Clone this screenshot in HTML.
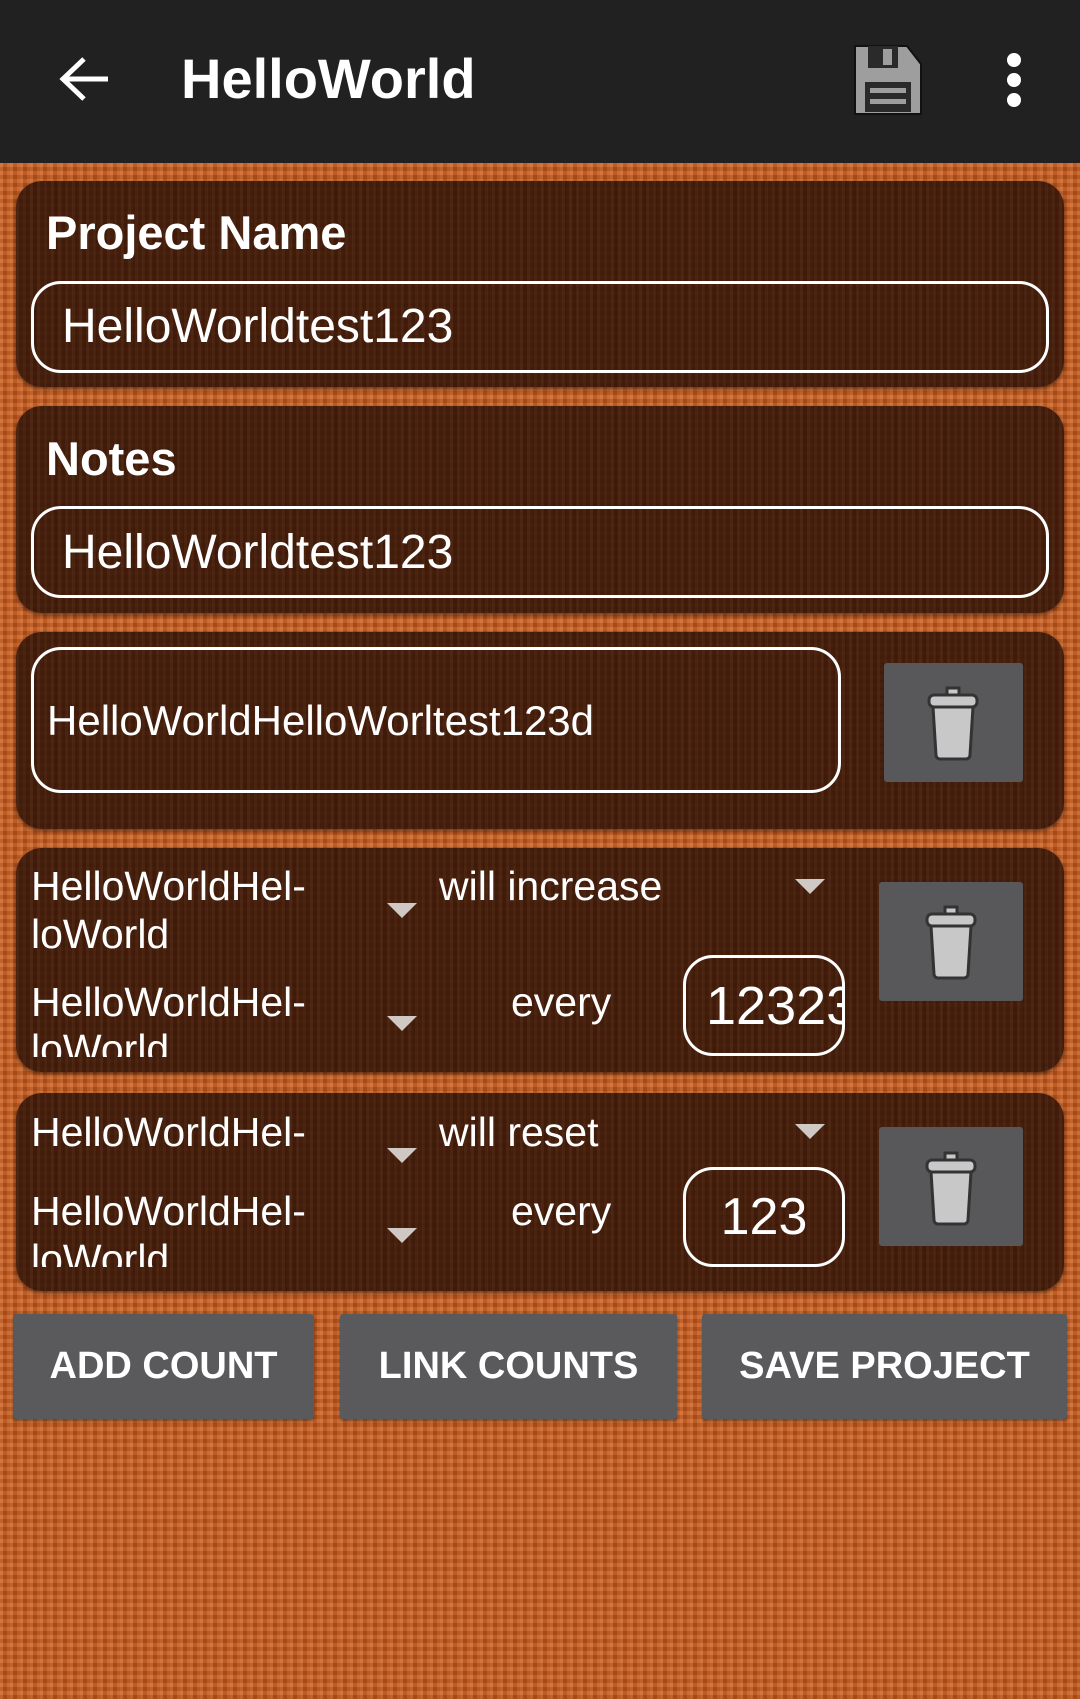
<!DOCTYPE html>
<html><head><meta charset="utf-8"><style>
*{margin:0;padding:0;box-sizing:border-box}
body{width:1080px;height:1699px;position:relative;overflow:hidden;font-family:"Liberation Sans",sans-serif;color:#fff;
background-color:#c0591f;
background-image:repeating-linear-gradient(90deg,rgba(255,190,140,.18) 0 3px,rgba(120,40,5,.15) 3px 7px,rgba(255,170,120,.1) 7px 10px),
repeating-linear-gradient(0deg,rgba(90,30,0,.15) 0 4px,rgba(255,200,150,.12) 4px 8px);}
.bar{position:absolute;left:0;top:0;width:1080px;height:163px;background:#212121}
.abs{position:absolute}
.card{position:absolute;left:16px;width:1048px;border-radius:26px;background:rgba(50,20,6,.86);box-shadow:0 2px 4px rgba(0,0,0,.5);
background-image:repeating-linear-gradient(90deg,rgba(255,255,255,.03) 0 3px,rgba(0,0,0,.05) 3px 7px)}
.inp{position:absolute;border:3px solid #fff;border-radius:30px}
.lbl{position:absolute;font-weight:bold;font-size:47px;left:46px}
.txt{position:absolute;white-space:nowrap;line-height:46px}
.trash{position:absolute;background:#58585a;border-radius:3px}
.btn{position:absolute;top:1314px;height:105px;background:#5a5a5c;border-radius:3px;font-size:38px;font-weight:bold;text-align:center;line-height:105px;box-shadow:0 2px 3px rgba(0,0,0,.4)}
.arr{position:absolute;width:0;height:0;border-left:15px solid transparent;border-right:15px solid transparent;border-top:15px solid #cfc8c4}
.clip{position:absolute;overflow:hidden}
</style></head><body>
<div class="bar"></div>
<svg class="abs" style="left:58px;top:56px" width="52" height="46" viewBox="0 0 52 46"><path d="M50 23H6M26 3L5 23l21 20" stroke="#fff" stroke-width="5" fill="none"/></svg>
<div class="abs" style="left:181px;top:44px;font-size:56px;font-weight:bold;line-height:70px">HelloWorld</div>
<svg class="abs" style="left:852px;top:44px" width="72" height="72" viewBox="0 0 72 72"><path d="M3 2h52l14 18v50H3z" fill="#9e9e9e" stroke="#111" stroke-width="2"/><rect x="16" y="2" width="30" height="22" fill="#2a2a2a"/><rect x="31" y="5" width="9" height="16" fill="#9e9e9e"/><rect x="13" y="38" width="46" height="30" fill="#2a2a2a"/><rect x="18" y="44" width="36" height="5" fill="#9e9e9e"/><rect x="18" y="55" width="36" height="5" fill="#9e9e9e"/></svg>
<div class="abs" style="left:1007px;top:53px;width:14px;height:14px;border-radius:7px;background:#fff"></div>
<div class="abs" style="left:1007px;top:73px;width:14px;height:14px;border-radius:7px;background:#fff"></div>
<div class="abs" style="left:1007px;top:93px;width:14px;height:14px;border-radius:7px;background:#fff"></div>

<div class="card" style="top:181px;height:206px"></div>
<div class="lbl" style="top:205px">Project Name</div>
<div class="inp" style="left:31px;top:281px;width:1018px;height:92px"></div>
<div class="txt" style="left:62px;top:304px;font-size:48px">HelloWorldtest123</div>

<div class="card" style="top:406px;height:207px"></div>
<div class="lbl" style="top:431px">Notes</div>
<div class="inp" style="left:31px;top:506px;width:1018px;height:92px"></div>
<div class="txt" style="left:62px;top:530px;font-size:48px">HelloWorldtest123</div>

<div class="card" style="top:632px;height:197px"></div>
<div class="inp" style="left:31px;top:647px;width:810px;height:146px"></div>
<div class="txt" style="left:47px;top:698px;font-size:42px">HelloWorldHelloWorltest123d</div>
<div class="trash" style="left:884px;top:663px;width:139px;height:119px"></div>

<div class="card" style="top:848px;height:224px"></div>
<div class="txt" style="left:31px;top:863px;font-size:41px">HelloWorldHel-</div>
<div class="txt" style="left:31px;top:911px;font-size:41px">loWorld</div>
<div class="arr" style="left:387px;top:903px"></div>
<div class="txt" style="left:439px;top:863px;font-size:41px">will increase</div>
<div class="arr" style="left:795px;top:879px"></div>
<div class="trash" style="left:879px;top:882px;width:144px;height:119px"></div>
<div class="txt" style="left:31px;top:979px;font-size:41px">HelloWorldHel-</div>
<div class="clip" style="left:31px;top:1020px;width:300px;height:37px"><div class="txt" style="left:0;top:6px;font-size:41px">loWorld</div></div>
<div class="arr" style="left:387px;top:1016px"></div>
<div class="txt" style="left:511px;top:979px;font-size:41px">every</div>
<div class="inp" style="left:683px;top:955px;width:162px;height:101px;overflow:hidden"><div class="txt" style="left:20px;top:25px;font-size:54px">12323</div></div>

<div class="card" style="top:1093px;height:198px"></div>
<div class="txt" style="left:31px;top:1109px;font-size:41px">HelloWorldHel-</div>
<div class="clip" style="left:31px;top:1152px;width:300px;height:8px"><div class="txt" style="left:0;top:5px;font-size:41px">loWorld</div></div>
<div class="arr" style="left:387px;top:1148px"></div>
<div class="txt" style="left:439px;top:1109px;font-size:41px">will reset</div>
<div class="arr" style="left:795px;top:1124px"></div>
<div class="trash" style="left:879px;top:1127px;width:144px;height:119px"></div>
<div class="txt" style="left:31px;top:1188px;font-size:41px">HelloWorldHel-</div>
<div class="clip" style="left:31px;top:1230px;width:300px;height:37px"><div class="txt" style="left:0;top:6px;font-size:41px">loWorld</div></div>
<div class="arr" style="left:387px;top:1228px"></div>
<div class="txt" style="left:511px;top:1188px;font-size:41px">every</div>
<div class="inp" style="left:683px;top:1167px;width:162px;height:100px"><div class="txt" style="left:0;width:156px;text-align:center;top:24px;font-size:52px">123</div></div>

<svg class="abs" style="left:925px;top:683px" width="56" height="80" viewBox="0 0 56 76"><path d="M22 10V3h12v7" fill="#c8c8c8" stroke="#333" stroke-width="3"/><rect x="4" y="10" width="48" height="12" rx="5" fill="#c8c8c8" stroke="#333" stroke-width="3"/><path d="M8 22h40l-3 48a4 4 0 0 1-4 4H15a4 4 0 0 1-4-4z" fill="#c8c8c8" stroke="#333" stroke-width="3"/></svg>
<svg class="abs" style="left:923px;top:902px" width="56" height="80" viewBox="0 0 56 76"><path d="M22 10V3h12v7" fill="#c8c8c8" stroke="#333" stroke-width="3"/><rect x="4" y="10" width="48" height="12" rx="5" fill="#c8c8c8" stroke="#333" stroke-width="3"/><path d="M8 22h40l-3 48a4 4 0 0 1-4 4H15a4 4 0 0 1-4-4z" fill="#c8c8c8" stroke="#333" stroke-width="3"/></svg>
<svg class="abs" style="left:923px;top:1148px" width="56" height="80" viewBox="0 0 56 76"><path d="M22 10V3h12v7" fill="#c8c8c8" stroke="#333" stroke-width="3"/><rect x="4" y="10" width="48" height="12" rx="5" fill="#c8c8c8" stroke="#333" stroke-width="3"/><path d="M8 22h40l-3 48a4 4 0 0 1-4 4H15a4 4 0 0 1-4-4z" fill="#c8c8c8" stroke="#333" stroke-width="3"/></svg>

<div class="btn" style="left:13px;width:301px">ADD COUNT</div>
<div class="btn" style="left:340px;width:337px">LINK COUNTS</div>
<div class="btn" style="left:702px;width:365px">SAVE PROJECT</div>
</body></html>
